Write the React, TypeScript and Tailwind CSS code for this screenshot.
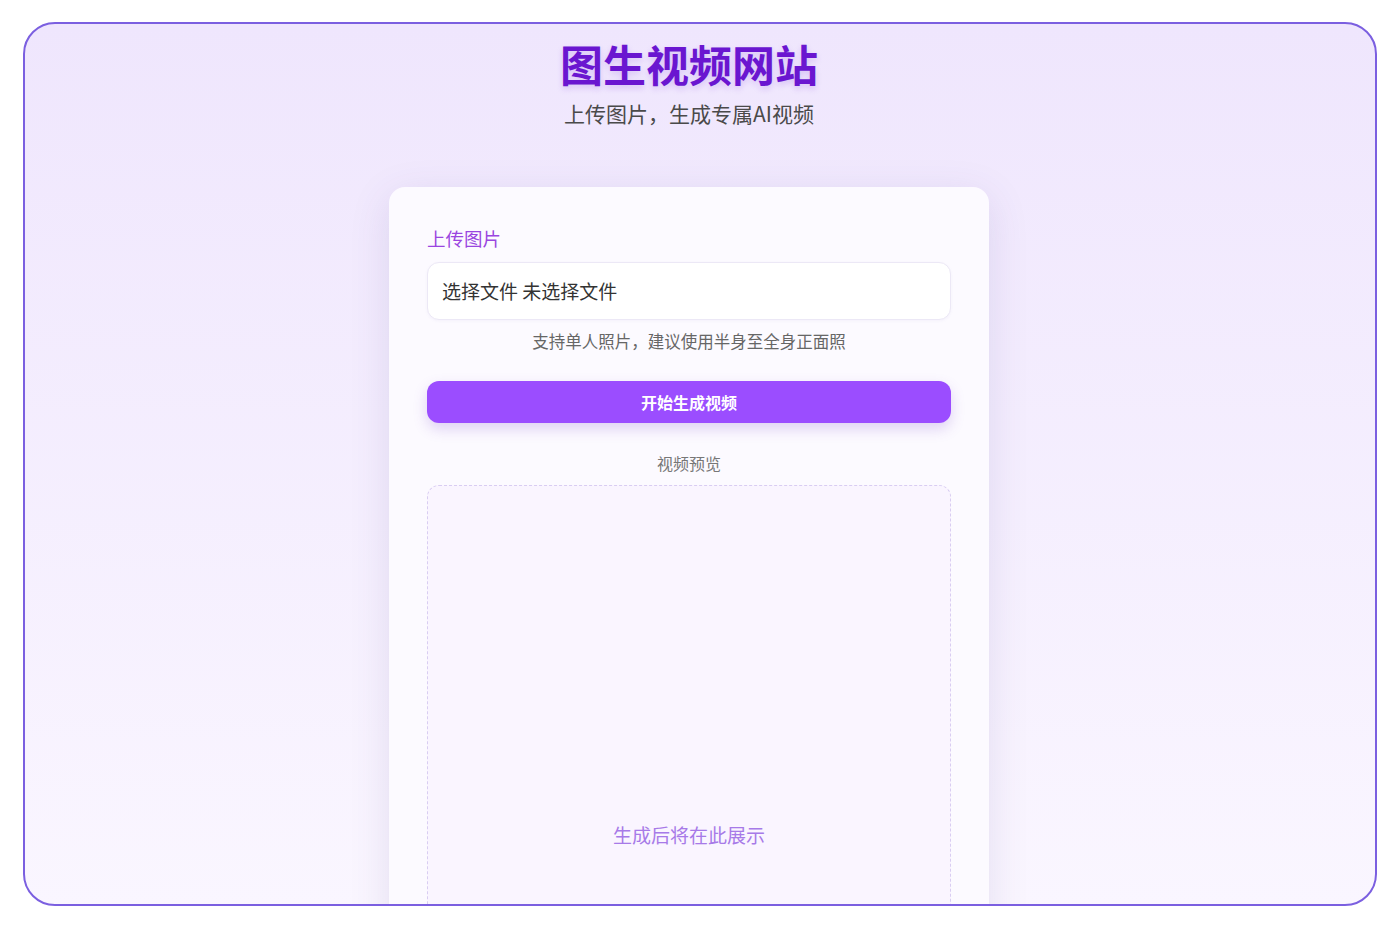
export default function App() {
  return (
    <div
      className="h-screen w-full bg-white pt-[22px] px-[23px]"
      style={{ fontFamily: '"Noto Sans CJK SC", "Noto Sans", sans-serif' }}
    >
      <div className="h-[884px] rounded-[32px] border-2 border-[#7b5fe0] bg-gradient-to-b from-[#efe6fd] to-[#faf6ff] overflow-hidden flex flex-col items-center pr-[22px]">
        {/* Header */}
        <h1 className="mt-[13px] text-[43px] leading-[53px] font-bold text-[#6a16d0] [text-shadow:0_3px_6px_rgba(106,22,208,0.18)]">
          图生视频网站
        </h1>
        <p className="mt-[9px] text-[21px] leading-[28px] text-[#4a4a4a]">
          上传图片，生成专属AI视频
        </p>

        {/* Card */}
        <div className="mt-[60px] w-[600px] shrink-0 rounded-[16px] bg-[#fcfaff] px-[38px] pt-[38px] pb-10 shadow-[0_10px_40px_rgba(80,60,140,0.13)]">
          <div className="text-[18.5px] leading-[26px] text-[#9a45e0]">上传图片</div>
          <div className="mt-[11px] h-[58px] rounded-[12px] border border-[#ece8f6] bg-white px-[14px] flex items-center text-[19px] text-[#333] shadow-[0_1px_3px_rgba(120,100,180,0.06)]">
            选择文件 未选择文件
          </div>
          <p className="mt-[10px] text-center text-[16.5px] leading-[22px] text-[#666]">
            支持单人照片，建议使用半身至全身正面照
          </p>
          <button className="mt-[29px] h-[42px] w-full rounded-[12px] bg-[#9b4dff] text-[16px] font-bold text-white shadow-[0_6px_14px_rgba(120,70,200,0.22)]">
            开始生成视频
          </button>
          <p className="mt-[29px] text-center text-[16px] leading-[22px] text-[#777]">视频预览</p>
          <div className="mt-[11px] h-[700px] rounded-[12px] border border-dashed border-[#d9cdf2] bg-[#faf5ff] flex items-center justify-center text-[19px] text-[#a77ae8]">
            生成后将在此展示
          </div>
        </div>
      </div>
    </div>
  );
}
